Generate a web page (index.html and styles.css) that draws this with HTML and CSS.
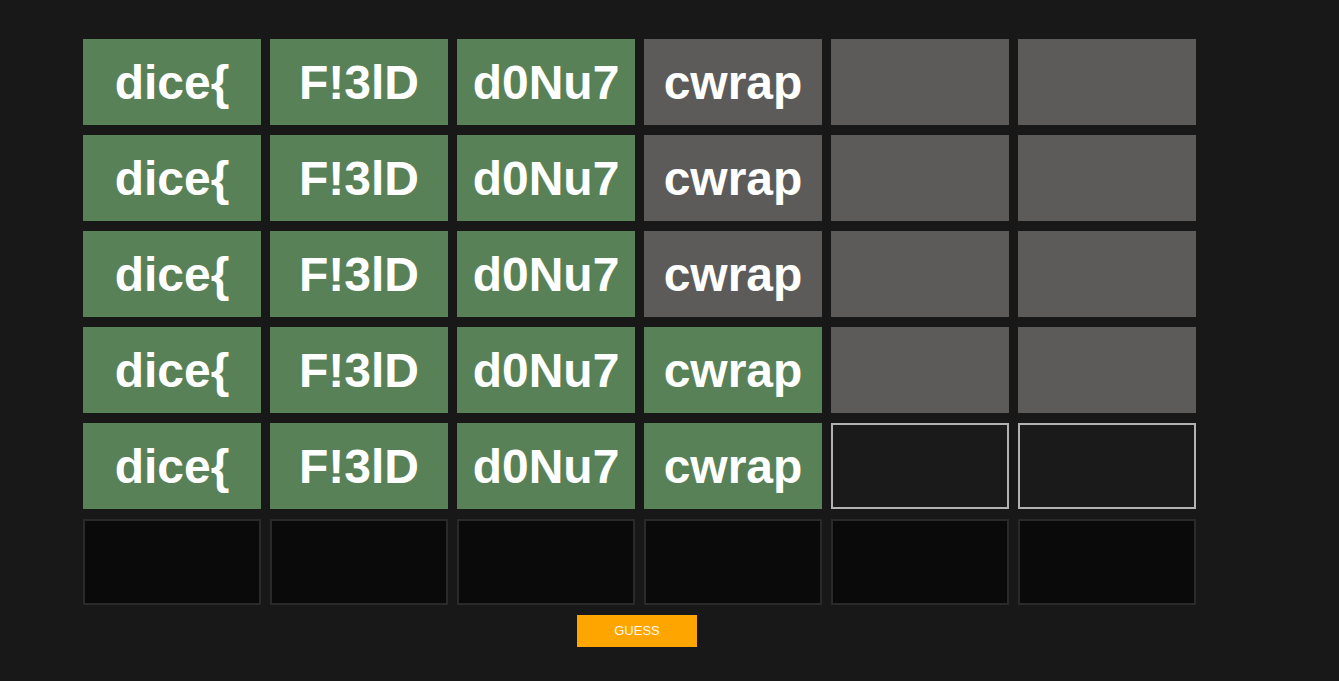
FILE: index.html
```html
<!DOCTYPE html>
<html>
<head>
<meta charset="utf-8">
<link rel="stylesheet" href="styles.css">
</head>
<body>
<div class="game">
  <div class="board">
    <div class="cell green">dice{</div><div class="cell green">F!3lD</div><div class="cell green">d0Nu7</div><div class="cell gray">cwrap</div><div class="cell gray"></div><div class="cell gray"></div>
    <div class="cell green">dice{</div><div class="cell green">F!3lD</div><div class="cell green">d0Nu7</div><div class="cell gray">cwrap</div><div class="cell gray"></div><div class="cell gray"></div>
    <div class="cell green">dice{</div><div class="cell green">F!3lD</div><div class="cell green">d0Nu7</div><div class="cell gray">cwrap</div><div class="cell gray"></div><div class="cell gray"></div>
    <div class="cell green">dice{</div><div class="cell green">F!3lD</div><div class="cell green">d0Nu7</div><div class="cell green">cwrap</div><div class="cell gray"></div><div class="cell gray"></div>
    <div class="cell green">dice{</div><div class="cell green">F!3lD</div><div class="cell green">d0Nu7</div><div class="cell green">cwrap</div><div class="cell active"></div><div class="cell active"></div>
    <div class="cell empty"></div><div class="cell empty"></div><div class="cell empty"></div><div class="cell empty"></div><div class="cell empty"></div><div class="cell empty"></div>
  </div>
  <button class="guess">GUESS</button>
</div>
</body>
</html>
```

FILE: styles.css
```css
html, body {
  margin: 0;
  padding: 0;
  background: #181818;
  height: 100%;
}
body {
  font-family: "Liberation Sans", Arial, sans-serif;
}
.game {
  padding: 39px 0 0 83px;
  display: flex;
  flex-direction: column;
  align-items: flex-start;
}
.board {
  display: grid;
  grid-template-columns: repeat(6, 178px);
  grid-auto-rows: 86px;
  column-gap: 9px;
  row-gap: 10px;
}
.cell {
  box-sizing: border-box;
  display: flex;
  align-items: center;
  justify-content: center;
  color: #ffffff;
  font-weight: bold;
  font-size: 48px;
}
.green { background: #598157; }
.gray { background: #5c5b5a; }
.active {
  background: #1a1a1a;
  border: 2px solid #b2b2b2;
}
.empty {
  background: #0a0a0a;
  border: 2px solid #2a2a2a;
}
.guess {
  margin: 10px 0 0 494px;
  width: 120px;
  height: 32px;
  border: none;
  background: #ffa500;
  color: #fff8ee;
  font-family: "Liberation Sans", Arial, sans-serif;
  font-size: 13px;
  padding: 0 0 2px 0;
}
```
